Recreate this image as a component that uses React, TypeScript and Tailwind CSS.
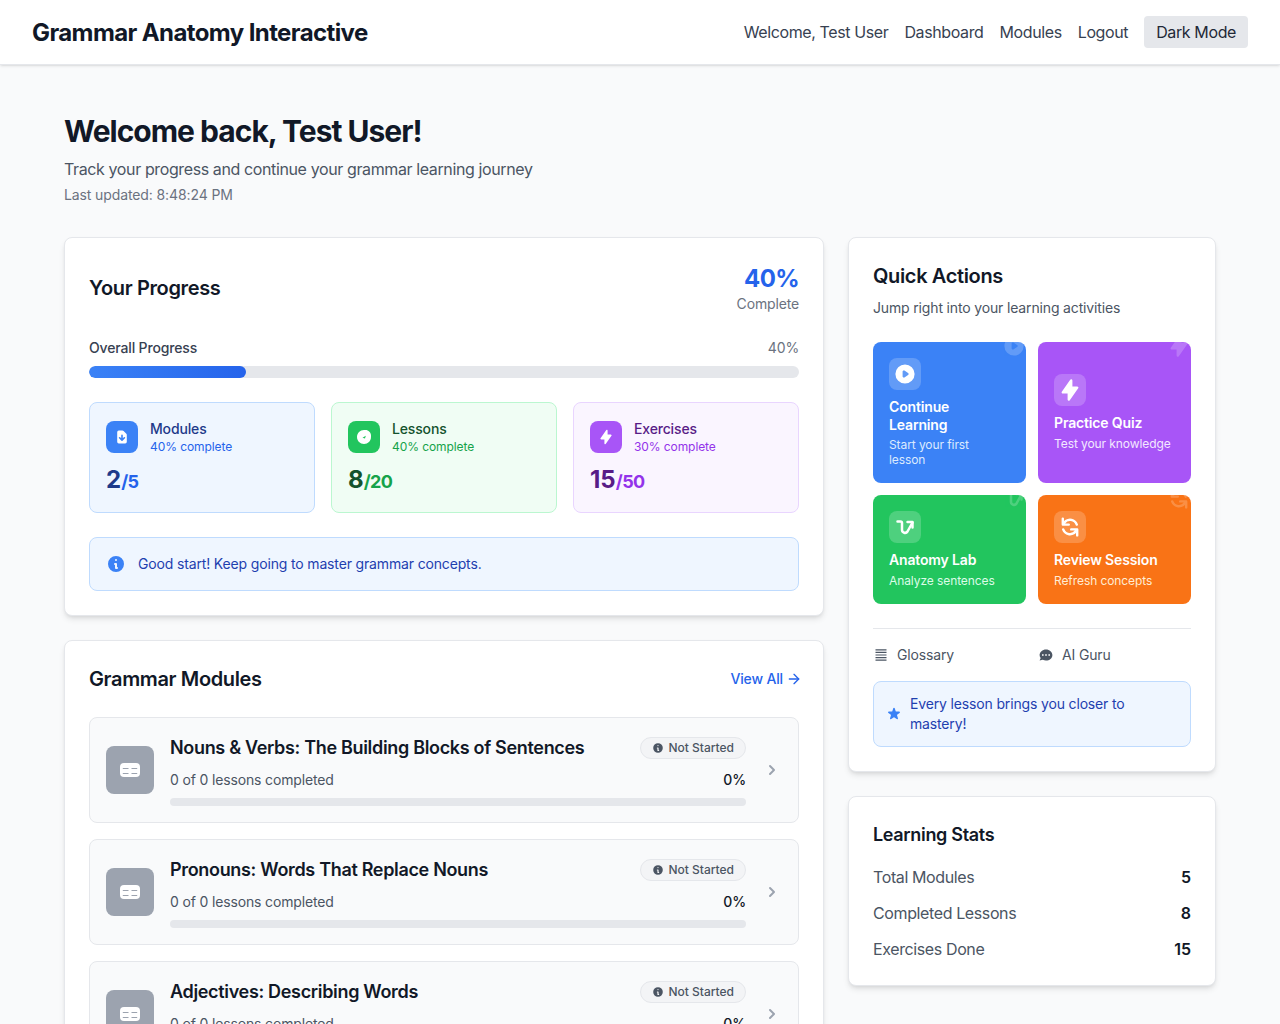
import React from "react";
import { ArrowRight } from "lucide-react";
import {
  HiPlay,
  HiLightningBolt,
  HiRefresh,
  HiDocumentDownload,
  HiInformationCircle,
  HiChat,
  HiStar,
  HiChevronRight,
} from "react-icons/hi";

const AnatomyIcon = ({ className }: { className?: string }) => (
  <svg viewBox="0 0 24 24" className={className} fill="none" stroke="currentColor" strokeWidth="2.5" strokeLinecap="round" strokeLinejoin="round">
    <path d="M4.500 6.500h3c1 0 1.500.6 1.500 1.500v7a3 3 0 0 0 5.500 1.500L19.500 7.500" />
    <path d="M14.500 7H19.500V12.500" />
  </svg>
);

const LessonIcon = ({ className }: { className?: string }) => (
  <svg viewBox="0 0 16 16" className={className}>
    <path d="M8 1h1.500c3 0 5.500 2.500 5.500 5.500V8c0 3.900-3.100 7-7 7s-7-3.100-7-7 3.100-7 7-7z" fill="white" />
    <path d="M6.500 8.800 9.800 6.800 9 9.400z" fill="#22c55e" />
  </svg>
);

const ModuleGlyph = ({ className }: { className?: string }) => (
  <svg viewBox="0 0 24 24" className={className}>
    <rect x="2" y="5" width="20" height="14" rx="4" fill="white" />
    <path d="M4.800 10.500h5.700M13.500 10.500h5.700M4.800 15.500h5.700M13.500 15.500h5.700" stroke="#9ca3af" strokeWidth="1.200" />
  </svg>
);

const GlossaryIcon = ({ className }: { className?: string }) => (
  <svg viewBox="0 0 16 16" className={className} fill="none" stroke="currentColor" strokeWidth="1.200">
    <path d="M2.500 2.800h11M2.500 5.400h11M2.500 8h11M2.500 10.600h11M2.500 13.200h11" />
  </svg>
);

const StatCard = ({
  icon,
  iconBg,
  box,
  title,
  subtitle,
  value,
  total,
  titleColor,
  subColor,
  valueColor,
  totalColor,
}: {
  icon: React.ReactNode;
  iconBg: string;
  box: string;
  title: string;
  subtitle: string;
  value: string;
  total: string;
  titleColor: string;
  subColor: string;
  valueColor: string;
  totalColor: string;
}) => (
  <div className={`rounded-lg border p-4 ${box}`}>
    <div className="mb-[9px] flex items-center gap-3">
      <div className={`flex h-8 w-8 items-center justify-center rounded-lg text-white ${iconBg}`}>{icon}</div>
      <div>
        <div className={`text-sm font-medium tracking-[-0.011em] ${titleColor}`}>{title}</div>
        <div className={`text-xs tracking-[-0.007em] ${subColor}`}>{subtitle}</div>
      </div>
    </div>
    <div className={`text-2xl font-bold ${valueColor}`}>
      {value}
      <span className={`text-lg font-bold tracking-[-0.03em] ${totalColor}`}>{total}</span>
    </div>
  </div>
);

const Tile = ({
  icon,
  ghost,
  bg,
  title,
  sub,
  subColor,
}: {
  icon: React.ReactNode;
  ghost: React.ReactNode;
  bg: string;
  title: string;
  sub: React.ReactNode;
  subColor: string;
}) => (
  <div className={`relative flex flex-col justify-center overflow-hidden rounded-lg p-4 text-white ${bg}`}>
    <div className="absolute right-0 top-[-8px] opacity-20">{ghost}</div>
    <div className="mb-2 flex h-8 w-8 items-center justify-center rounded-lg bg-white/20">{icon}</div>
    <div className="text-sm font-semibold leading-tight tracking-[-0.011em]">{title}</div>
    <div className={`mt-1 text-xs leading-tight tracking-[-0.007em] ${subColor}`}>{sub}</div>
  </div>
);

const ModuleRow = ({ title }: { title: string }) => (
  <div className="flex items-center gap-4 rounded-lg border border-[#e5e7eb] bg-[#f9fafb] p-4">
    <div className="flex h-12 w-12 shrink-0 items-center justify-center rounded-lg bg-[#9ca3af]">
      <ModuleGlyph className="h-6 w-6" />
    </div>
    <div className="min-w-0 flex-1">
      <div className="mb-2 flex items-center justify-between">
        <h3 className="text-lg font-semibold tracking-[-0.018em] text-[#111827]">{title}</h3>
        <span className="flex items-center gap-1 rounded-full border border-[#e5e7eb] bg-[#f3f4f6] px-[11px] py-0.5 text-xs font-medium text-[#4b5563]">
          <HiInformationCircle className="h-3 w-3" />
          Not Started
        </span>
      </div>
      <div className="mb-2 flex items-center justify-between text-sm tracking-[-0.011em]">
        <span className="text-[#4b5563]">0 of 0 lessons completed</span>
        <span className="font-medium text-[#111827]">0%</span>
      </div>
      <div className="h-2 rounded-full bg-[#e5e7eb]" />
    </div>
    <HiChevronRight className="h-5 w-5 shrink-0 text-[#9ca3af]" />
  </div>
);

export default function App() {
  return (
    <div className="min-h-screen bg-[#f9fafb] font-['Inter',sans-serif] text-[#111827]">
      <header className="flex items-center justify-between border-b border-[#e5e7eb] bg-white px-8 py-4 shadow-sm">
        <div className="mt-0.5 text-2xl font-bold leading-[30px] tracking-[-0.025em] text-[#111827]">Grammar Anatomy Interactive</div>
        <nav className="flex items-center gap-4 tracking-[-0.024em] text-[#374151]">
          <span>Welcome, Test User</span>
          <span>Dashboard</span>
          <span>Modules</span>
          <span>Logout</span>
          <button className="rounded bg-[#e5e7eb] px-3 py-1 tracking-[-0.024em] text-[#1f2937]">Dark Mode</button>
        </nav>
      </header>

      <main className="px-16 py-12">
        <div className="mb-8">
          <h1 className="mb-2 text-3xl font-bold tracking-[-0.033em] text-[#111827]">Welcome back, Test User!</h1>
          <p className="tracking-[-0.024em] text-[#4b5563]">Track your progress and continue your grammar learning journey</p>
          <p className="mt-1 text-sm tracking-[-0.008em] text-[#6b7280]">Last updated: 8:48:24 PM</p>
        </div>

        <div className="grid grid-cols-3 gap-6">
          <div className="col-span-2 flex flex-col gap-6">
            <section className="rounded-lg border border-[#e5e7eb] bg-white p-6 shadow-md">
              <div className="mb-6 flex items-center justify-between">
                <h2 className="text-xl font-semibold tracking-[-0.018em] text-[#111827]">Your Progress</h2>
                <div className="text-right">
                  <div className="pt-0.5 text-2xl font-bold leading-[30px] tracking-[-0.025em] text-[#2563eb]">40%</div>
                  <div className="text-sm tracking-[-0.011em] text-[#6b7280]">Complete</div>
                </div>
              </div>

              <div className="mb-2 flex items-center justify-between text-sm tracking-[-0.011em]">
                <span className="font-medium text-[#374151]">Overall Progress</span>
                <span className="text-[#6b7280]">40%</span>
              </div>
              <div className="mb-6 h-3 overflow-hidden rounded-full bg-[#e5e7eb]">
                <div className="h-full w-[157px] rounded-full bg-gradient-to-r from-[#3b82f6] to-[#2563eb]" />
              </div>

              <div className="mb-6 grid grid-cols-3 gap-4">
                <StatCard
                  icon={<HiDocumentDownload className="h-4 w-4" />}
                  iconBg="bg-[#3b82f6]"
                  box="border-[#bfdbfe] bg-[#eff6ff]"
                  title="Modules"
                  subtitle="40% complete"
                  value="2"
                  total="/5"
                  titleColor="text-[#1e3a8a]"
                  subColor="text-[#2563eb]"
                  valueColor="text-[#1e3a8a]"
                  totalColor="text-[#2563eb]"
                />
                <StatCard
                  icon={<LessonIcon className="h-4 w-4" />}
                  iconBg="bg-[#22c55e]"
                  box="border-[#bbf7d0] bg-[#f0fdf4]"
                  title="Lessons"
                  subtitle="40% complete"
                  value="8"
                  total="/20"
                  titleColor="text-[#14532d]"
                  subColor="text-[#16a34a]"
                  valueColor="text-[#14532d]"
                  totalColor="text-[#16a34a]"
                />
                <StatCard
                  icon={<HiLightningBolt className="h-4 w-4" />}
                  iconBg="bg-[#a855f7]"
                  box="border-[#e9d5ff] bg-[#faf5ff]"
                  title="Exercises"
                  subtitle="30% complete"
                  value="15"
                  total="/50"
                  titleColor="text-[#581c87]"
                  subColor="text-[#9333ea]"
                  valueColor="text-[#581c87]"
                  totalColor="text-[#9333ea]"
                />
              </div>

              <div className="flex items-center gap-3 rounded-lg border border-[#bfdbfe] bg-[#eff6ff] p-4 text-sm tracking-[-0.011em] text-[#1e40af]">
                <HiInformationCircle className="h-5 w-5 text-[#3b82f6]" />
                <span>Good start! Keep going to master grammar concepts.</span>
              </div>
            </section>

            <section className="rounded-lg border border-[#e5e7eb] bg-white p-6 shadow-md">
              <div className="mb-6 flex items-center justify-between">
                <h2 className="text-xl font-semibold tracking-[-0.018em] text-[#111827]">Grammar Modules</h2>
                <span className="flex items-center gap-[3px] text-sm font-medium tracking-[-0.011em] text-[#2563eb]">
                  View All
                  <ArrowRight className="-mr-[3px] h-4 w-4" strokeWidth={2} />
                </span>
              </div>
              <div className="flex flex-col gap-4">
                <ModuleRow title="Nouns & Verbs: The Building Blocks of Sentences" />
                <ModuleRow title="Pronouns: Words That Replace Nouns" />
                <ModuleRow title="Adjectives: Describing Words" />
              </div>
            </section>
          </div>

          <div className="flex flex-col gap-6">
            <section className="rounded-lg border border-[#e5e7eb] bg-white p-6 shadow-md">
              <h2 className="mb-2 text-xl font-semibold tracking-[-0.018em] text-[#111827]">Quick Actions</h2>
              <p className="mb-6 text-sm tracking-[-0.011em] text-[#4b5563]">Jump right into your learning activities</p>
              <div className="grid grid-cols-2 gap-3">
                <Tile
                  bg="bg-[#3b82f6]"
                  subColor="text-[#dbeafe]"
                  icon={<HiPlay className="h-6 w-6" />}
                  ghost={<HiPlay className="h-6 w-6" />}
                  title="Continue Learning"
                  sub={
                    <>
                      Start your first
                      <br />
                      lesson
                    </>
                  }
                />
                <Tile
                  bg="bg-[#a855f7]"
                  subColor="text-[#f3e8ff]"
                  icon={<HiLightningBolt className="h-6 w-6" />}
                  ghost={<HiLightningBolt className="h-6 w-6" />}
                  title="Practice Quiz"
                  sub="Test your knowledge"
                />
                <Tile
                  bg="bg-[#22c55e]"
                  subColor="text-[#dcfce7]"
                  icon={<AnatomyIcon className="h-6 w-6" />}
                  ghost={<AnatomyIcon className="h-6 w-6" />}
                  title="Anatomy Lab"
                  sub="Analyze sentences"
                />
                <Tile
                  bg="bg-[#f97316]"
                  subColor="text-[#ffedd5]"
                  icon={<HiRefresh className="h-6 w-6" />}
                  ghost={<HiRefresh className="h-6 w-6" />}
                  title="Review Session"
                  sub="Refresh concepts"
                />
              </div>

              <div className="mt-6 border-t border-[#e5e7eb] pt-4">
                <div className="grid grid-cols-2 gap-3 text-sm tracking-[-0.011em] text-[#4b5563]">
                  <div className="flex items-center gap-2">
                    <GlossaryIcon className="h-4 w-4 text-[#4b5563]" />
                    Glossary
                  </div>
                  <div className="flex items-center gap-2">
                    <HiChat className="h-4 w-4 text-[#4b5563]" />
                    AI Guru
                  </div>
                </div>
              </div>

              <div className="mt-4 flex items-center gap-2 rounded-lg border border-[#bfdbfe] bg-[#eff6ff] p-3 text-sm tracking-[-0.011em] text-[#1e40af]">
                <HiStar className="h-4 w-4 shrink-0 text-[#3b82f6]" />
                <span>Every lesson brings you closer to mastery!</span>
              </div>
            </section>

            <section className="rounded-lg border border-[#e5e7eb] bg-white p-6 shadow-md">
              <h3 className="mb-4 text-lg font-semibold tracking-[-0.018em] text-[#111827]">Learning Stats</h3>
              <div className="flex flex-col gap-3">
                {[
                  ["Total Modules", "5"],
                  ["Completed Lessons", "8"],
                  ["Exercises Done", "15"],
                ].map(([label, value]) => (
                  <div key={label} className="flex items-center justify-between">
                    <span className="tracking-[-0.024em] text-[#4b5563]">{label}</span>
                    <span className="font-semibold text-[#111827]">{value}</span>
                  </div>
                ))}
              </div>
            </section>
          </div>
        </div>
      </main>
    </div>
  );
}
